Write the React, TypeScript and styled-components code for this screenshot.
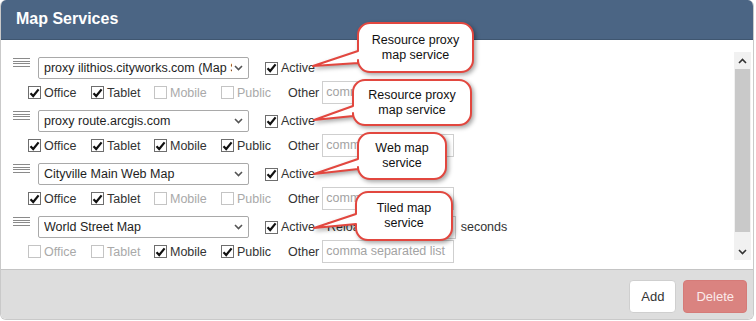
import { FC } from "react";
import styled, { createGlobalStyle } from "styled-components";

const GlobalStyle = createGlobalStyle`
  body {
    margin: 0;
    background: #fff;
    font-family: "Liberation Sans", Arial, sans-serif;
  }
`;

const Panel = styled.div`
  width: 754px;
  height: 320px;
  display: flex;
  flex-direction: column;
  border: 1px solid #c9c9c9;
  border-top: none;
  border-radius: 6px;
  box-sizing: border-box;
  overflow: hidden;
`;

const Header = styled.div`
  height: 40px;
  flex: none;
  box-sizing: border-box;
  background: #4b6584;
  border-bottom: 1px solid #3f5670;
  color: #fff;
  font-size: 16px;
  font-weight: bold;
  padding: 10px 0 0 15px;
`;

const Body = styled.div`
  position: relative;
  height: 230px;
  flex: none;
  display: flex;
  border-bottom: 1px solid #c4c4c4;
  box-sizing: border-box;
`;

const List = styled.div`
  flex: 1;
  padding: 17px 0 0 12px;
  display: flex;
  flex-direction: column;
  gap: 6px;
`;

const Row = styled.div`
  display: flex;
  flex-direction: column;
  gap: 2px;
`;

const MainLine = styled.div`
  display: flex;
  align-items: center;
  height: 22px;
  font-size: 12.5px;
  color: #333;
`;

const Handle = styled.div`
  width: 17px;
  margin-right: 8px;
  align-self: flex-start;
  margin-top: 1px;
  display: flex;
  flex-direction: column;
  gap: 1.5px;

  span {
    height: 1px;
    background: #8a8a8a;
  }
`;

const SelectBox = styled.div`
  width: 211px;
  height: 22px;
  box-sizing: border-box;
  border: 1px solid #a9a9a9;
  border-radius: 2px;
  display: flex;
  align-items: center;
  padding: 0 5px 0 5px;
  font-size: 12.5px;
  color: #1e1e1e;
  background: #fff;

  span {
    flex: 1;
    white-space: nowrap;
    overflow: hidden;
  }

  svg {
    flex: none;
    margin-left: 2px;
  }
`;

const SubLine = styled.div`
  display: flex;
  align-items: center;
  height: 23px;
  padding-left: 15px;
  font-size: 12.5px;
`;

const CheckItem = styled.label<{ $width?: number; $disabled?: boolean; $gap?: number }>`
  display: flex;
  align-items: center;
  flex: none;
  width: ${({ $width }) => ($width ? `${$width}px` : "auto")};
  margin-left: ${({ $gap }) => $gap ?? 0}px;
  color: ${({ $disabled }) => ($disabled ? "#a9a9a9" : "#333")};
`;

const Box = styled.span<{ $disabled?: boolean }>`
  width: 13px;
  height: 13px;
  box-sizing: border-box;
  border: 1px solid ${({ $disabled }) => ($disabled ? "#c4c4c4" : "#6e6e6e")};
  background: #fff;
  margin-right: 3px;
  display: flex;
  align-items: center;
  justify-content: center;
`;

const Text = styled.span<{ $gap?: number; $muted?: boolean }>`
  margin-left: ${({ $gap }) => $gap ?? 0}px;
  color: ${({ $muted }) => ($muted ? "#a9a9a9" : "#333")};
  white-space: nowrap;
`;

const Field = styled.div<{ $width: number }>`
  width: ${({ $width }) => $width}px;
  height: 23px;
  box-sizing: border-box;
  margin-left: 3px;
  border: 1px solid #cfcfcf;
  color: #a3a3a3;
  font-size: 12.5px;
  padding: 3px 0 0 3px;
  white-space: nowrap;
  overflow: hidden;
`;

const Scrollbar = styled.div`
  width: 17px;
  margin: 12px 2px 9px 0;
  background: #f1f1f1;
  display: flex;
  flex-direction: column;
  align-items: center;
`;

const ScrollArrow = styled.div`
  height: 17px;
  display: flex;
  align-items: center;
  justify-content: center;
`;

const Thumb = styled.div`
  width: 15px;
  height: 163px;
  background: #c9c9c9;
`;

const Footer = styled.div`
  flex: 1;
  background: #dddddd;
  display: flex;
  justify-content: flex-end;
  align-items: flex-start;
  gap: 7px;
  padding: 10px 6px 0 0;
`;

const Button = styled.div<{ $danger?: boolean }>`
  height: 33px;
  box-sizing: border-box;
  padding: 0 ${({ $danger }) => ($danger ? 12 : 11)}px;
  display: flex;
  align-items: center;
  border-radius: 4px;
  font-size: 13px;
  background: ${({ $danger }) => ($danger ? "#da8380" : "#fff")};
  border: 1px solid ${({ $danger }) => ($danger ? "#d57b78" : "#cfcfcf")};
  color: ${({ $danger }) => ($danger ? "#fbeaea" : "#333")};
`;

const CalloutWrap = styled.div`
  position: absolute;
  display: flex;
  align-items: center;
  justify-content: center;

  svg {
    position: absolute;
    left: 0;
    top: 0;
    overflow: visible;
    filter: drop-shadow(2px 2px 2px rgba(0, 0, 0, 0.35));
  }
`;

const CalloutText = styled.div`
  position: relative;
  text-align: center;
  font-size: 12.5px;
  line-height: 15px;
  color: #111;
`;

const Tick = () => (
  <svg width="11" height="10" viewBox="0 0 11 10">
    <path d="M1.5 5.2 L4.2 8 L9.6 1.4" fill="none" stroke="#111" strokeWidth="2.2" />
  </svg>
);

const Check: FC<{ checked: boolean; disabled?: boolean; label: string; width?: number; gap?: number }> = ({
  checked,
  disabled,
  label,
  width,
  gap,
}) => (
  <CheckItem $width={width} $disabled={disabled} $gap={gap}>
    <Box $disabled={disabled}>{checked && <Tick />}</Box>
    {label}
  </CheckItem>
);

const Chevron: FC<{ up?: boolean; color?: string }> = ({ up, color = "#555" }) => (
  <svg width="9" height="6" viewBox="0 0 9 6">
    <path
      d={up ? "M1 5 L4.5 1.5 L8 5" : "M1 1 L4.5 4.5 L8 1"}
      fill="none"
      stroke={color}
      strokeWidth="1.6"
    />
  </svg>
);

type Service = {
  name: string;
  office: boolean;
  tablet: boolean;
  mobile: boolean;
  public: boolean;
  reload?: boolean;
};

const services: Service[] = [
  { name: "proxy ilithios.cityworks.com (Map Service)", office: true, tablet: true, mobile: false, public: false },
  { name: "proxy route.arcgis.com", office: true, tablet: true, mobile: true, public: true },
  { name: "Cityville Main Web Map", office: true, tablet: true, mobile: false, public: false },
  { name: "World Street Map", office: false, tablet: false, mobile: true, public: true, reload: true },
];

const ServiceRow: FC<{ service: Service }> = ({ service }) => (
  <Row>
    <MainLine>
      <Handle>
        <span />
        <span />
        <span />
        <span />
      </Handle>
      <SelectBox>
        <span>{service.name}</span>
        <Chevron />
      </SelectBox>
      <Check checked label="Active" gap={16} />
      {service.reload && (
        <>
          <Text $gap={12}>Reload every</Text>
          <Field $width={52} />
          <Text $gap={5}>seconds</Text>
        </>
      )}
    </MainLine>
    <SubLine>
      <Check checked={service.office} disabled={!service.office} label="Office" width={63} />
      <Check checked={service.tablet} disabled={!service.tablet} label="Tablet" width={63} />
      <Check checked={service.mobile} disabled={!service.mobile} label="Mobile" width={67} />
      <Check checked={service.public} disabled={!service.public} label="Public" width={67} />
      <Text>Other</Text>
      <Field $width={132}>comma separated list</Field>
    </SubLine>
  </Row>
);

type CalloutProps = {
  x: number;
  y: number;
  w: number;
  h: number;
  y1: number;
  y2: number;
  tipX: number;
  tipY: number;
  lines: string[];
};

const Callout: FC<CalloutProps> = ({ x, y, w, h, y1, y2, tipX, tipY, lines }) => {
  const r = 12;
  const tx = tipX - x;
  const ty = tipY - y;
  const d = `M ${r} 0 H ${w - r} A ${r} ${r} 0 0 1 ${w} ${r} V ${h - r} A ${r} ${r} 0 0 1 ${w - r} ${h} H ${r} A ${r} ${r} 0 0 1 0 ${h - r} V ${y2} L ${tx} ${ty} L 0 ${y1} V ${r} A ${r} ${r} 0 0 1 ${r} 0 Z`;
  return (
    <CalloutWrap style={{ left: x, top: y, width: w, height: h }}>
      <svg width={w} height={h}>
        <path d={d} fill="#fff" stroke="#e2473f" strokeWidth="2" strokeLinejoin="round" />
      </svg>
      <CalloutText>
        {lines.map((l) => (
          <div key={l}>{l}</div>
        ))}
      </CalloutText>
    </CalloutWrap>
  );
};

const callouts: CalloutProps[] = [
  { x: 357, y: -17, w: 115, h: 49, y1: 28, y2: 40, tipX: 312, tipY: 26, lines: ["Resource proxy", "map service"] },
  { x: 352, y: 40, w: 118, h: 45, y1: 26, y2: 36, tipX: 313, tipY: 80, lines: ["Resource proxy", "map service"] },
  { x: 357, y: 93, w: 88, h: 46, y1: 26, y2: 36, tipX: 313, tipY: 134, lines: ["Web map", "service"] },
  { x: 355, y: 152, w: 96, h: 48, y1: 22, y2: 32, tipX: 313, tipY: 188, lines: ["Tiled map", "service"] },
];

export default function App() {
  return (
    <>
      <GlobalStyle />
      <Panel>
        <Header>Map Services</Header>
        <Body>
          <List>
            {services.map((s) => (
              <ServiceRow key={s.name} service={s} />
            ))}
          </List>
          <Scrollbar>
            <ScrollArrow>
              <Chevron up color="#333" />
            </ScrollArrow>
            <Thumb />
            <div style={{ flex: 1 }} />
            <ScrollArrow>
              <Chevron color="#333" />
            </ScrollArrow>
          </Scrollbar>
          {callouts.map((c, i) => (
            <Callout key={i} {...c} />
          ))}
        </Body>
        <Footer>
          <Button>Add</Button>
          <Button $danger>Delete</Button>
        </Footer>
      </Panel>
    </>
  );
}
